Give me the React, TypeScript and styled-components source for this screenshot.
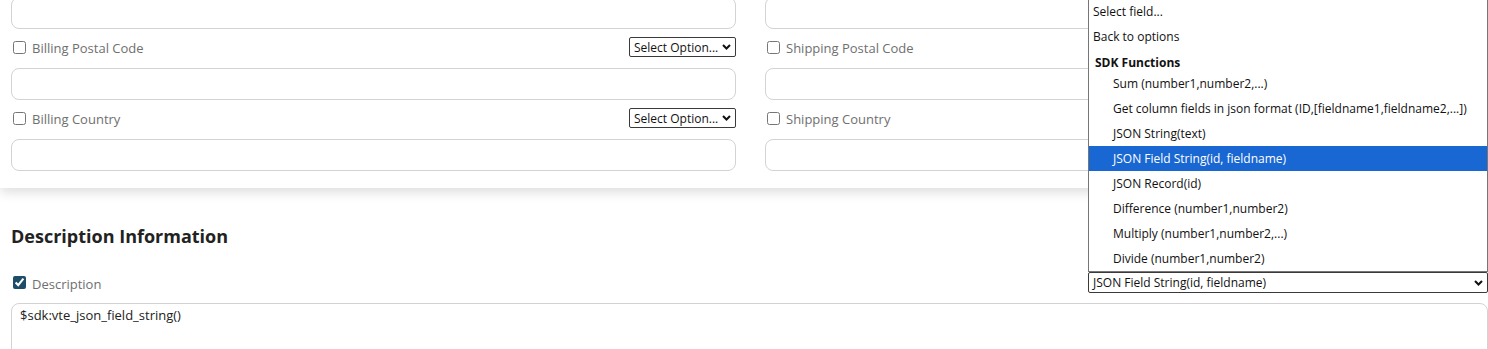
import styled, { createGlobalStyle } from 'styled-components';

const GlobalStyle = createGlobalStyle`
    html, body {
        margin: 0;
        padding: 0;
        background: #fff;
    }
    body {
        font-family: "Open Sans", "Liberation Sans", sans-serif;
        overflow: hidden;
    }
`;

const Page = styled.div`
    width: 1488px;
    height: 349px;
    overflow: hidden;
`;

const Card = styled.div`
    margin-top: -3px;
    padding: 0 11px 17px 11px;
    display: grid;
    grid-template-columns: 725px 1fr;
    column-gap: 29px;
    background: #fff;
    box-shadow: 0 5px 10px rgba(0, 0, 0, 0.12);
`;

const Column = styled.div`
    display: flex;
    flex-direction: column;
`;

const TextInput = styled.input`
    box-sizing: border-box;
    width: 100%;
    height: 32px;
    margin: 0;
    border: 1px solid #d3d3d3;
    border-radius: 8px;
    background: #fff;
    outline: none;
`;

const FieldRow = styled.div`
    display: flex;
    align-items: center;
    height: 20px;
    margin: 8px 0 11px;
`;

const CheckBox = styled.input`
    width: 13px;
    height: 13px;
    margin: 0 6px 0 2px;
    accent-color: #1d4d68;
`;

const Label = styled.span`
    margin-top: 2px;
    font-size: 13px;
    color: #6f6f6f;
`;

const SelectBox = styled.div<{ $width: number; $height: number }>`
    margin-left: auto;
    box-sizing: border-box;
    width: ${p => p.$width}px;
    height: ${p => p.$height}px;
    border: 1px solid #3a3a3a;
    border-radius: 2px;
    padding: 0 4px 0 4px;
    display: flex;
    align-items: center;
    justify-content: space-between;
    font-size: 12px;
    color: #111;
    background: #fff;
    white-space: nowrap;
`;

const Section = styled.section`
    padding: 36px 0 0 11px;
`;

const Heading = styled.h2`
    margin: 0;
    font-size: 18px;
    font-weight: 700;
    line-height: 24px;
    color: #222;
`;

const DescRow = styled.div`
    display: flex;
    align-items: center;
    height: 21px;
    margin-top: 24px;
`;

const SelectWrap = styled.div`
    position: relative;
    margin-left: auto;
    display: flex;
`;

const OptionList = styled.ul`
    position: absolute;
    left: 0;
    right: 0;
    bottom: 100%;
    z-index: 10;
    margin: 0;
    padding: 0;
    list-style: none;
    border: 1px solid #767676;
    background: #fff;
    font-size: 12px;
`;

const OptionItem = styled.li<{ $indent: number; $selected?: boolean; $group?: boolean }>`
    box-sizing: border-box;
    height: ${p => (p.$group ? 22 : 25)}px;
    padding-top: ${p => (p.$group ? 4 : 0)}px;
    display: flex;
    align-items: center;
    padding-left: ${p => p.$indent}px;
    color: ${p => (p.$selected ? '#fff' : '#111')};
    background: ${p => (p.$selected ? '#1967d2' : 'transparent')};
    font-weight: ${p => (p.$group ? 700 : 400)};
    white-space: nowrap;
`;

const TextArea = styled.textarea`
    display: block;
    box-sizing: border-box;
    width: 100%;
    height: 90px;
    margin: 10px 0 0;
    padding: 2px 8px;
    border: 1px solid #d3d3d3;
    border-radius: 8px;
    font-family: "Open Sans", "Liberation Sans", sans-serif;
    font-size: 13px;
    color: #222;
    resize: none;
    outline: none;
`;

const Chevron = () => (
    <svg width="9" height="6" viewBox="0 0 9 6">
        <path d="M1 1l3.5 3.5L8 1" fill="none" stroke="#111" strokeWidth="2" />
    </svg>
);

interface FieldProps {
    label: string;
    withSelect?: boolean;
}

// right column selects sit under the open list, so they are left out
const Field: React.FC<FieldProps> = ({ label, withSelect }) => (
    <>
        <FieldRow>
            <CheckBox type="checkbox" />
            <Label>{label}</Label>
            {withSelect && (
                <SelectBox $width={107} $height={20}>
                    <span>Select Option...</span>
                    <Chevron />
                </SelectBox>
            )}
        </FieldRow>
        <TextInput />
    </>
);

const options = [
    { text: 'Select field...', indent: 4 },
    { text: 'Back to options', indent: 4 },
    { text: 'SDK Functions', indent: 6, group: true },
    { text: 'Sum (number1,number2,...)', indent: 24 },
    { text: 'Get column fields in json format (ID,[fieldname1,fieldname2,...])', indent: 24 },
    { text: 'JSON String(text)', indent: 24 },
    { text: 'JSON Field String(id, fieldname)', indent: 24, selected: true },
    { text: 'JSON Record(id)', indent: 24 },
    { text: 'Difference (number1,number2)', indent: 24 },
    { text: 'Multiply (number1,number2,...)', indent: 24 },
    { text: 'Divide (number1,number2)', indent: 24 },
];

export default function App() {
    return (
        <Page>
            <GlobalStyle />
            <Card>
                <Column>
                    <TextInput />
                    <Field label="Billing Postal Code" withSelect />
                    <Field label="Billing Country" withSelect />
                </Column>
                <Column>
                    <TextInput />
                    <Field label="Shipping Postal Code" />
                    <Field label="Shipping Country" />
                </Column>
            </Card>
            <Section>
                <Heading>Description Information</Heading>
                <DescRow>
                    <CheckBox type="checkbox" defaultChecked />
                    <Label>Description</Label>
                    <SelectWrap>
                        <OptionList>
                            {options.map(o => (
                                <OptionItem key={o.text} $indent={o.indent} $selected={o.selected} $group={o.group}>
                                    {o.text}
                                </OptionItem>
                            ))}
                        </OptionList>
                        <SelectBox $width={400} $height={21}>
                            <span>JSON Field String(id, fieldname)</span>
                            <Chevron />
                        </SelectBox>
                    </SelectWrap>
                </DescRow>
                <TextArea defaultValue="$sdk:vte_json_field_string()" />
            </Section>
        </Page>
    );
}
